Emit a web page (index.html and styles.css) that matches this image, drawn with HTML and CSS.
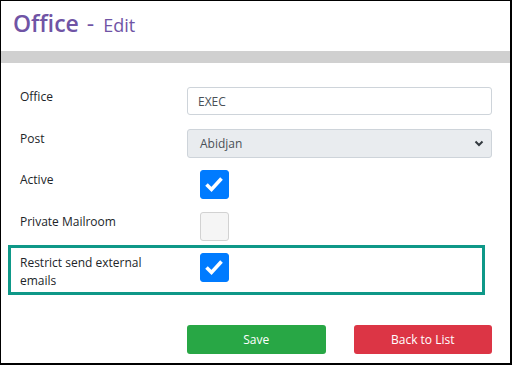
FILE: index.html
```html
<!DOCTYPE html>
<html lang="en">
<head>
    <meta charset="UTF-8">
    <title>Office - Edit</title>
    <link rel="stylesheet" href="styles.css">
</head>
<body>
    <div class="frame">
        <h1 class="page-title">Office <span class="sep">-</span> <small>Edit</small></h1>
        <div class="band"></div>

        <form class="edit-form">
            <div class="form-row">
                <label class="form-label" for="office">Office</label>
                <input class="form-control" type="text" id="office" value="EXEC">
            </div>
            <div class="form-row">
                <label class="form-label" for="post">Post</label>
                <div class="form-select">
                    <span>Abidjan</span>
                    <svg width="10" height="7" viewBox="0 0 10 7"><polyline points="1.5,1.5 5,5 8.5,1.5" fill="none" stroke="#343a40" stroke-width="2"/></svg>
                </div>
            </div>
            <div class="form-row">
                <label class="form-label">Active</label>
                <span class="check checked">
                    <svg width="28" height="28" viewBox="0 0 28 28"><polyline points="6.5,14.5 11.5,19.5 21.5,8.5" fill="none" stroke="#fff" stroke-width="3.6"/></svg>
                </span>
            </div>
            <div class="form-row">
                <label class="form-label">Private Mailroom</label>
                <span class="check"></span>
            </div>
            <div class="form-row highlight">
                <label class="form-label">Restrict send external emails</label>
                <span class="check checked">
                    <svg width="28" height="28" viewBox="0 0 28 28"><polyline points="6.5,14.5 11.5,19.5 21.5,8.5" fill="none" stroke="#fff" stroke-width="3.6"/></svg>
                </span>
            </div>
            <div class="actions">
                <button type="button" class="btn btn-save">Save</button>
                <button type="button" class="btn btn-back">Back to List</button>
            </div>
        </form>
    </div>
</body>
</html>
```

FILE: styles.css
```css
body {
    margin: 0;
    font-family: "Open Sans", "Noto Sans", sans-serif;
    color: #212529;
    background: #fff;
}
.frame {
    width: 509px;
    height: 362px;
    border-top: 1px solid #000;
    border-left: 1px solid #000;
    border-right: 2px solid #000;
    border-bottom: 2px solid #000;
    overflow: hidden;
}
.page-title {
    margin: 0;
    height: 50px;
    padding-left: 12px;
    font-size: 23px;
    font-weight: 600;
    line-height: 44px;
    color: #7054a5;
}
.page-title .sep {
    margin: 0 3px 0 2px;
    font-weight: 400;
}
.page-title small {
    font-size: 18px;
    font-weight: 400;
}
.band {
    height: 12px;
    background: #d0d0d0;
}
.edit-form {
    padding: 24px 18px 0 19px;
}
.form-row {
    display: flex;
    align-items: flex-start;
    height: 29px;
    margin-bottom: 12.5px;
}
.form-label {
    width: 150px;
    margin-right: 17px;
    padding-top: 1px;
    font-size: 12px;
    line-height: 18px;
}
.form-control {
    flex: 1;
    box-sizing: border-box;
    height: 28px;
    margin: 0;
    padding: 0 10px;
    border: 1px solid #ced4da;
    border-radius: 3px;
    font-family: inherit;
    font-size: 12px;
    color: #495057;
}
.form-select {
    flex: 1;
    display: flex;
    align-items: center;
    justify-content: space-between;
    box-sizing: border-box;
    height: 29px;
    padding: 0 7px 0 12px;
    border: 1px solid #ced4da;
    border-radius: 3px;
    background: #e9ecef;
    font-size: 12px;
    color: #495057;
}
.check {
    display: block;
    box-sizing: border-box;
    width: 29px;
    height: 29px;
    margin-left: 13px;
    border: 1px solid #d2d2d2;
    border-radius: 3px;
    background: #f5f5f5;
}
.check.checked {
    border-color: #007bff;
    background: #007bff;
}
.check svg {
    display: block;
    margin: -1px;
}
.highlight {
    height: auto;
    margin: -8px 7px 0 -12px;
    padding: 5px 0 2px 9px;
    border: 3px solid #0e9888;
}
.actions {
    display: flex;
    gap: 28px;
    margin: 30px 0 0 167px;
}
.btn {
    flex: 1;
    height: 29px;
    border: none;
    border-radius: 3px;
    font-family: inherit;
    font-size: 12px;
    color: #fff;
}
.btn-save {
    background: #28a745;
}
.btn-back {
    background: #dc3545;
}
```
